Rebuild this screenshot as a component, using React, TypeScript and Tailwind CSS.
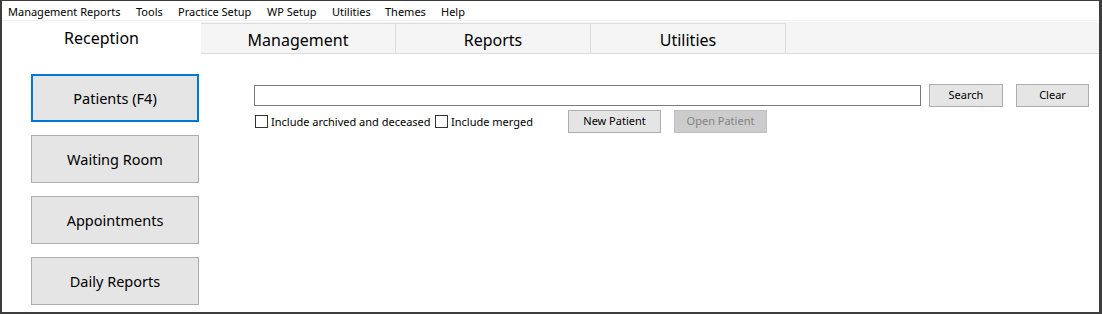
import React, { type FC } from "react";

const font = { fontFamily: '"Noto Sans", "Open Sans", Arial, sans-serif' };

const menu = [
  { label: "Management Reports", w: "w-[128px]" },
  { label: "Tools", w: "w-[42px]" },
  { label: "Practice Setup", w: "w-[89px]" },
  { label: "WP Setup", w: "w-[65px]" },
  { label: "Utilities", w: "w-[53px]" },
  { label: "Themes", w: "w-[56px]" },
  { label: "Help", w: "w-[40px]" },
];

const sideButtons = ["Patients (F4)", "Waiting Room", "Appointments", "Daily Reports"];

const Checkbox: FC<{ label: string }> = ({ label }) => (
  <label className="flex items-center gap-[3px] whitespace-nowrap">
    <span className="w-[13px] h-[13px] border border-[#333333] bg-white shrink-0" />
    <span className="text-[11px] text-black leading-none">{label}</span>
  </label>
);

const App: FC = () => {
  return (
    <div
      className="w-[1102px] h-[314px] bg-white border-t border-l-2 border-r-[3px] border-b-2 border-[#3c3c3c] flex flex-col overflow-hidden"
      style={font}
    >
      {/* menu bar */}
      <div className="h-[20px] flex items-center pl-[6px] pt-[3px] text-[11px] text-black border-b border-[#f0f0f0]">
        {menu.map((m) => (
          <span key={m.label} className={`${m.w} whitespace-nowrap`}>
            {m.label}
          </span>
        ))}
      </div>

      {/* tabs */}
      <div className="h-[32px] flex bg-[#f5f5f5] border-b border-[#dcdcdc] mt-px">
        <div className="w-[199px] bg-white -mb-px flex justify-center pt-[4px] text-[16px] text-black">
          Reception
        </div>
        {["Management", "Reports", "Utilities"].map((t) => (
          <div
            key={t}
            className="w-[195px] mt-[1px] border border-l-0 border-b-0 border-[#dcdcdc] flex justify-center pt-[4px] text-[16px] text-black"
          >
            {t}
          </div>
        ))}
      </div>

      {/* body */}
      <div className="flex pl-[29px] pt-[20px]">
        <div className="flex flex-col gap-[13px]">
          {sideButtons.map((b, i) => (
            <button
              key={b}
              className={`w-[168px] h-[48px] bg-[#e5e5e5] text-[14.5px] text-black flex items-center justify-center pt-px ${
                i === 0 ? "border-2 border-[#0078d7]" : "border border-[#adadad]"
              }`}
            >
              {b}
            </button>
          ))}
        </div>

        <div className="ml-[55px] pt-[10px] flex flex-col">
          <div className="flex items-center">
            <div className="w-[667px] h-[21px] border border-[#7a7a7a] bg-white" />
            <button className="ml-[8px] w-[74px] h-[23px] bg-[#e5e5e5] border border-[#adadad] text-[11px] text-black">
              Search
            </button>
            <button className="ml-[13px] w-[73px] h-[23px] bg-[#e5e5e5] border border-[#adadad] text-[11px] text-black">
              Clear
            </button>
          </div>
          <div className="flex items-center mt-[3px]">
            <div className="w-[181px] pl-px">
              <Checkbox label="Include archived and deceased" />
            </div>
            <div className="w-[133px]">
              <Checkbox label="Include merged" />
            </div>
            <button className="w-[93px] h-[23px] bg-[#e5e5e5] border border-[#adadad] text-[11px] text-black">
              New Patient
            </button>
            <button className="ml-[13px] w-[93px] h-[23px] bg-[#cccccc] border border-[#bfbfbf] text-[11px] text-[#838383]">
              Open Patient
            </button>
          </div>
        </div>
      </div>
    </div>
  );
};

export default App;
